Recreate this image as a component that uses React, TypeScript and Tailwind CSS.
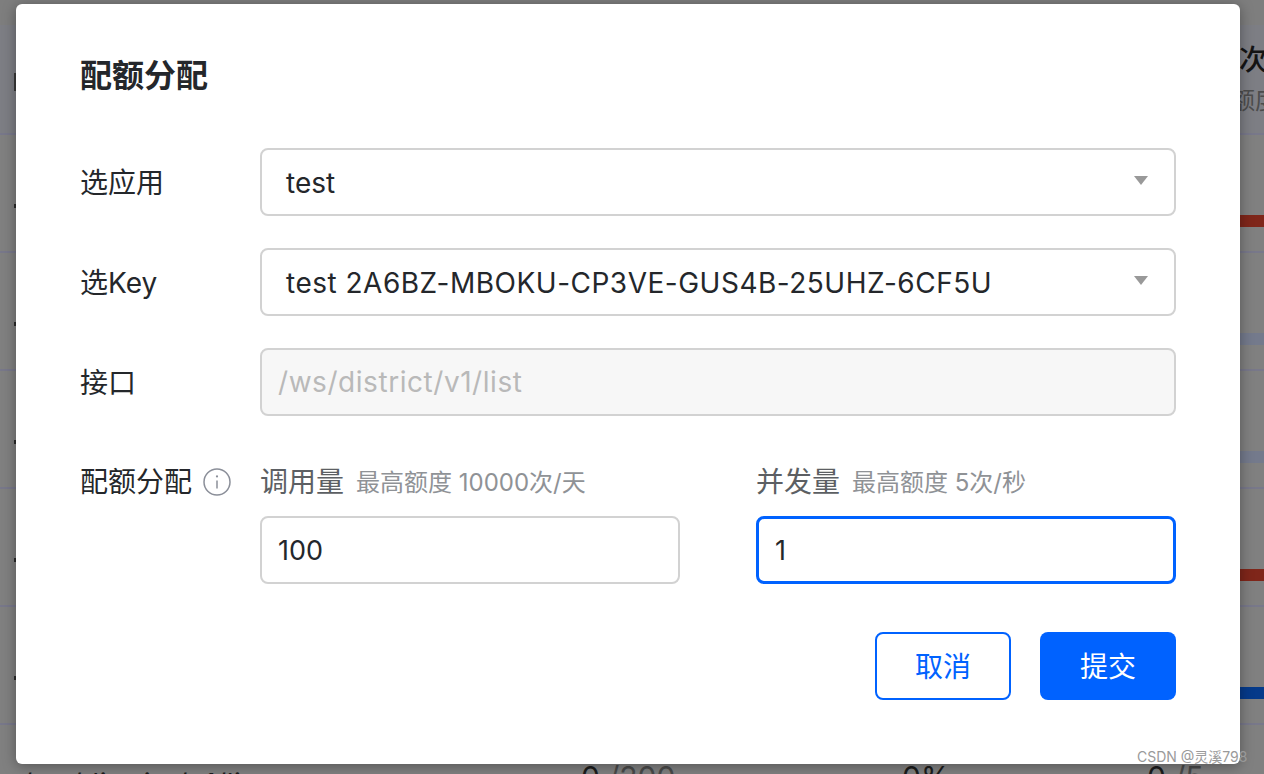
type BackRowProps = {
  bar?: string;
};

const BackRow = ({ bar }: BackRowProps) => (
  <div className="h-[118px] border-b-2 border-[#78788a] flex justify-between">
    <div className="ml-[14px] mt-[69px] h-1 w-[2px] bg-[#2c2c2c]" />
    <div className={`mt-[80px] h-3 w-6 ${bar ?? ''}`} />
  </div>
);

const SelectBox = ({ text, textClass }: { text: string; textClass?: string }) => (
  <div className="h-[68px] flex-1 rounded-lg border-2 border-[#d2d2d2] bg-white pl-6 pr-[26px] pt-[2px] flex items-center justify-between text-[28px] text-[#24272b]">
    <span className={textClass}>{text}</span>
    <svg width="14" height="10" viewBox="0 0 14 10" className="-mt-[5px]">
      <path d="M0 0H14L7 9Z" fill="#999999" />
    </svg>
  </div>
);

const QuotaField = ({
  title,
  hint,
  value,
  focused,
}: {
  title: string;
  hint: string;
  value: string;
  focused?: boolean;
}) => (
  <div className="w-[420px]">
    <div className="-mt-[1px] flex items-baseline gap-3 h-[34px]">
      <span className="text-[28px] leading-[34px] text-[#5c5f63]">{title}</span>
      <span className="-translate-y-[1px] text-[24px] leading-[34px] text-[#8f9296]">{hint}</span>
    </div>
    <div
      className={`mt-[17px] h-[68px] rounded-lg bg-white pt-[2px] flex items-center text-[27px] text-[#24272b] ${
        focused ? 'border-[3px] border-[#0062ff] pl-4' : 'border-2 border-[#d2d2d2] pl-4'
      }`}
    >
      {value}
    </div>
  </div>
);

export default function App() {
  return (
    <div className="relative h-[774px] w-[1264px] overflow-hidden bg-[#808080] font-['Inter','Noto_Sans_CJK_SC',sans-serif]">
      <div className="h-[25px] bg-[#7e7e7e]" />
      {/* table behind the dialog */}
      <div className="relative h-[110px] border-b-2 border-[#78788a] bg-[#7d7e84] flex flex-col pt-[19px] whitespace-nowrap">
        <div className="absolute left-[14px] top-[48px] h-[18px] w-[2px] bg-[#3a3a3a]" />
        <span className="ml-[1239px] text-[28px] leading-8 font-medium text-[#141414]">次</span>
        <span className="ml-[1231px] mt-[9px] text-[24px] leading-8 text-[#4c4c4c]">额度</span>
      </div>
      <BackRow bar="bg-[#7f261a]" />
      <BackRow bar="bg-[#747a8c]" />
      <BackRow bar="bg-[#747a8c]" />
      <BackRow bar="bg-[#7f261a]" />
      <BackRow bar="bg-[#053a8a]" />
      <div className="flex items-start text-[30px] leading-9 text-[#1c1c1c] pt-[34px] whitespace-nowrap">
        <span className="ml-[22px] w-[559px] mt-[7px] text-[28px] tracking-[0.55px]">/ws/district/v1/list</span>
        <span className="w-[321px]">
          0 <span className="text-[#4a4a4a]">/200</span>
        </span>
        <span className="w-[245px]">0%</span>
        <span>
          0 <span className="text-[#4a4a4a]">/5</span>
        </span>
      </div>

      {/* dialog */}
      <div className="absolute left-4 top-1 h-[760px] w-[1224px] rounded-[6px] bg-white pl-[64px] pr-[64px] pt-[52px] shadow-[0_2px_14px_rgba(0,0,0,0.35)]">
        <h1 className="text-[32px] leading-10 font-bold text-[#24272b]">配额分配</h1>

        <div className="mt-[52px] flex items-center">
          <label className="w-[180px] pt-[2px] text-[28px] text-[#24272b]">选应用</label>
          <SelectBox text="test" />
        </div>

        <div className="mt-8 flex items-center">
          <label className="w-[180px] pt-[2px] text-[28px] text-[#24272b]">选Key</label>
          <SelectBox
            text="test 2A6BZ-MBOKU-CP3VE-GUS4B-25UHZ-6CF5U"
            textClass="tracking-[0.5px]"
          />
        </div>

        <div className="mt-8 flex items-center">
          <label className="w-[180px] pt-[2px] text-[28px] text-[#24272b]">接口</label>
          <div className="h-[68px] flex-1 rounded-lg border-2 border-[#d2d2d2] bg-[#f7f7f7] pl-4 flex items-center text-[28px] tracking-[0.55px] text-[#b9b9b9]">
            /ws/district/v1/list
          </div>
        </div>

        <div className="mt-[50px] flex items-start">
          <div className="-mt-[1px] w-[180px] flex items-center h-[34px] gap-[11px]">
            <label className="text-[28px] leading-[34px] text-[#24272b]">配额分配</label>
            <svg width="28" height="28" viewBox="0 0 28 28" fill="none">
              <circle cx="14" cy="14" r="13" stroke="#8b8f99" strokeWidth="1.5" />
              <circle cx="14" cy="8.4" r="1.1" fill="#8b8f99" />
              <path d="M14 12.5V20.5" stroke="#8b8f99" strokeWidth="1.5" />
            </svg>
          </div>
          <div className="flex-1 flex justify-between">
            <QuotaField title="调用量" hint="最高额度 10000次/天" value="100" />
            <QuotaField title="并发量" hint="最高额度 5次/秒" value="1" focused />
          </div>
        </div>

        <div className="mt-12 flex justify-end gap-[29px]">
          <button
            type="button"
            className="h-[68px] w-[136px] pt-[2px] rounded-lg border-2 border-[#0062ff] bg-white text-[28px] text-[#0062ff]"
          >
            取消
          </button>
          <button
            type="button"
            className="h-[68px] w-[136px] pt-[2px] rounded-lg bg-[#0062ff] text-[28px] text-white"
          >
            提交
          </button>
        </div>
      </div>

      <span className="absolute left-[1137px] top-[748px] text-[14px] leading-[18px] text-[#9a9a9a]">
        CSDN @灵溪798
      </span>
    </div>
  );
}
